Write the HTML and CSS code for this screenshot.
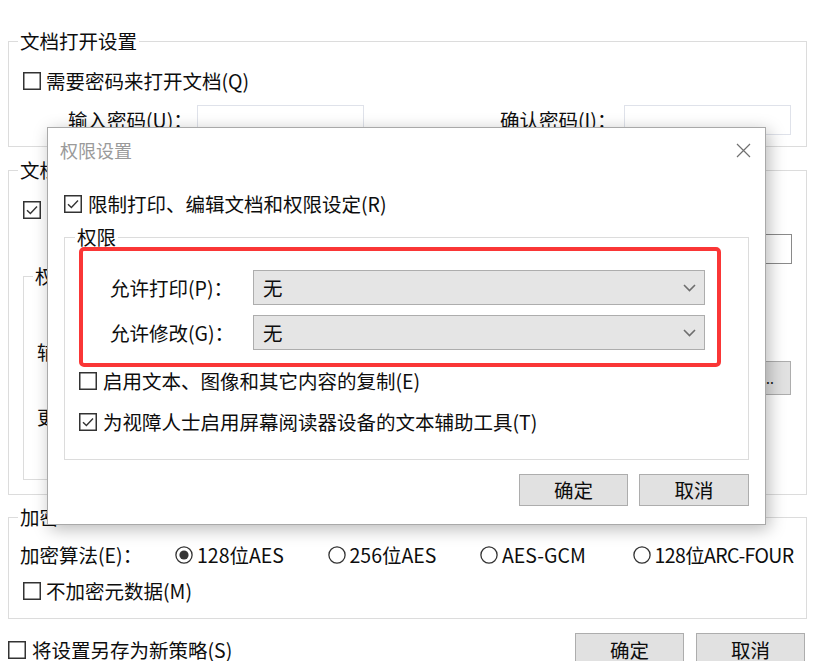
FILE: index.html
```html
<!DOCTYPE html>
<html lang="zh-CN">
<head>
<meta charset="utf-8">
<title>文档安全设置</title>
<link rel="stylesheet" href="styles.css">
</head>
<body>
<div class="page">
  <fieldset class="group g1">
    <legend>文档打开设置</legend>
    <div class="cbrow">
      <svg class="cb" viewBox="0 0 18 18"><rect x="0.75" y="0.75" width="16.5" height="16.5" fill="#fff" stroke="#333" stroke-width="1.5"/></svg>
      <span>需要密码来打开文档(Q)</span>
    </div>
    <div class="pwrow">
      <span class="pwlabel">输入密码(U)：</span>
      <span class="input"></span>
      <span class="pwlabel second">确认密码(I)：</span>
      <span class="input"></span>
    </div>
  </fieldset>

  <fieldset class="group g2">
    <legend>文档限制设置</legend>
    <div class="cbrow">
      <svg class="cb" viewBox="0 0 18 18"><rect x="0.75" y="0.75" width="16.5" height="16.5" fill="#fff" stroke="#333" stroke-width="1.5"/><path d="M4 9.2 7.4 12.6 14 5.6" fill="none" stroke="#333" stroke-width="1.4"/></svg>
      <span>限制打印</span>
    </div>
    <div class="pwrow2">
      <span class="pwlabel">密码</span>
      <span class="input dark"></span>
    </div>
    <div class="g2body">
      <fieldset class="group inner">
        <legend>权</legend>
        <div class="irow first">辅</div>
        <div class="irow second">更</div>
      </fieldset>
      <span class="btn more">...</span>
    </div>
  </fieldset>

  <fieldset class="group g3">
    <legend>加密</legend>
    <div class="radios">
      <span>加密算法(E)：</span>
      <span class="radio"><svg class="rd" viewBox="0 0 18 18"><circle cx="9" cy="9" r="8.1" fill="#fff" stroke="#333" stroke-width="1.3"/><circle cx="9" cy="9" r="4.6" fill="#333"/></svg>128位AES</span>
      <span class="radio"><svg class="rd" viewBox="0 0 18 18"><circle cx="9" cy="9" r="8.1" fill="#fff" stroke="#333" stroke-width="1.3"/></svg>256位AES</span>
      <span class="radio"><svg class="rd" viewBox="0 0 18 18"><circle cx="9" cy="9" r="8.1" fill="#fff" stroke="#333" stroke-width="1.3"/></svg>AES-GCM</span>
      <span class="radio"><svg class="rd" viewBox="0 0 18 18"><circle cx="9" cy="9" r="8.1" fill="#fff" stroke="#333" stroke-width="1.3"/></svg><span class="tight">128位ARC-FOUR</span></span>
    </div>
    <div class="cbrow meta">
      <svg class="cb" viewBox="0 0 18 18"><rect x="0.75" y="0.75" width="16.5" height="16.5" fill="#fff" stroke="#333" stroke-width="1.5"/></svg>
      <span>不加密元数据(M)</span>
    </div>
  </fieldset>

  <div class="footer">
    <svg class="cb" viewBox="0 0 18 18"><rect x="0.75" y="0.75" width="16.5" height="16.5" fill="#fff" stroke="#333" stroke-width="1.5"/></svg>
    <span class="savelabel">将设置另存为新策略(S)</span>
    <span class="btn main ok">确定</span>
    <span class="btn main">取消</span>
  </div>

  <div class="dialog">
    <div class="dlg-title">
      <span>权限设置</span>
      <svg class="close" viewBox="0 0 15 15"><path d="M1 1 14 14 M14 1 1 14" stroke="#707070" stroke-width="1.2" fill="none"/></svg>
    </div>
    <div class="dlg-check">
      <svg class="cb" viewBox="0 0 18 18"><rect x="0.75" y="0.75" width="16.5" height="16.5" fill="#fff" stroke="#333" stroke-width="1.5"/><path d="M4 9.2 7.4 12.6 14 5.6" fill="none" stroke="#333" stroke-width="1.4"/></svg>
      <span>限制打印、编辑文档和权限设定(R)</span>
    </div>
    <fieldset class="group perm">
      <legend>权限</legend>
      <div class="redbox">
        <div class="perm-row">
          <span class="perm-label">允许打印(P)：</span>
          <span class="select"><span>无</span><svg class="chev" viewBox="0 0 13 8"><path d="M1 1 6.5 6.5 12 1" fill="none" stroke="#6e6e6e" stroke-width="1.6"/></svg></span>
        </div>
        <div class="perm-row">
          <span class="perm-label">允许修改(G)：</span>
          <span class="select"><span>无</span><svg class="chev" viewBox="0 0 13 8"><path d="M1 1 6.5 6.5 12 1" fill="none" stroke="#6e6e6e" stroke-width="1.6"/></svg></span>
        </div>
      </div>
      <div class="pcheck first">
        <svg class="cb" viewBox="0 0 18 18"><rect x="0.75" y="0.75" width="16.5" height="16.5" fill="#fff" stroke="#333" stroke-width="1.5"/></svg>
        <span>启用文本、图像和其它内容的复制(E)</span>
      </div>
      <div class="pcheck second">
        <svg class="cb" viewBox="0 0 18 18"><rect x="0.75" y="0.75" width="16.5" height="16.5" fill="#fff" stroke="#333" stroke-width="1.5"/><path d="M4 9.2 7.4 12.6 14 5.6" fill="none" stroke="#333" stroke-width="1.4"/></svg>
        <span>为视障人士启用屏幕阅读器设备的文本辅助工具(T)</span>
      </div>
    </fieldset>
    <div class="dlg-buttons">
      <span class="btn dbtn ok">确定</span>
      <span class="btn dbtn cancel">取消</span>
    </div>
  </div>
</div>
</body>
</html>
```

FILE: styles.css
```css
html, body {
  margin: 0;
  padding: 0;
  background: #fff;
}
body {
  width: 817px;
  height: 661px;
  overflow: hidden;
  font-family: "Noto Sans CJK SC", "Noto Sans", sans-serif;
  font-size: 19.5px;
  line-height: 24px;
  color: #0d0d0d;
}
.page {
  position: relative;
  width: 799px;
  padding: 29px 0 0 8px;
}
.group {
  border: 1px solid #dcdcdc;
  margin: 0;
  padding: 0;
  min-width: 0;
}
.group > legend {
  margin-left: 9px;
  padding: 0 2px;
  line-height: 24px;
}
.cb {
  width: 18px;
  height: 18px;
  flex: none;
  display: block;
}
.rd {
  width: 18px;
  height: 18px;
  flex: none;
  display: block;
}
.cbrow {
  display: flex;
  align-items: center;
  gap: 5px;
  height: 24px;
  margin: 16px 0 0 14px;
  white-space: nowrap;
}
.pwrow {
  display: flex;
  align-items: center;
  height: 30px;
  margin: 12px 0 11px 59px;
  white-space: nowrap;
}
.pwlabel {
  width: 129px;
  flex: none;
}
.pwlabel.second {
  margin-left: 136px;
  width: 124px;
}
.input {
  display: block;
  width: 167px;
  height: 30px;
  box-sizing: border-box;
  border: 1px solid #dfe2ea;
  background: #fff;
  flex: none;
}
.input.dark {
  width: 190px;
  border-color: #8a8a8a;
}
.g2 {
  margin-top: 11px;
  padding-bottom: 14px;
}
.pwrow2 {
  display: flex;
  align-items: center;
  justify-content: space-between;
  height: 30px;
  margin: 12px 14px 0 59px;
  white-space: nowrap;
}
.g2body {
  display: grid;
}
.inner {
  grid-area: 1 / 1;
  margin: 0 46px 0 14px;
  padding-bottom: 50px;
}
.irow {
  height: 24px;
  margin-left: 13px;
  white-space: nowrap;
}
.irow.first { margin-top: 52px; }
.irow.second { margin-top: 41px; }
.btn {
  display: flex;
  align-items: center;
  justify-content: center;
  box-sizing: border-box;
  background: #e1e1e1;
  border: 1px solid #adadad;
  white-space: nowrap;
}
.btn.more {
  grid-area: 1 / 1;
  justify-self: end;
  align-self: start;
  width: 40px;
  height: 34px;
  margin: 97px 15px 0 0;
  padding-right: 6px;
  font-size: 14px;
}
.g3 {
  margin-top: 10px;
  padding-bottom: 15px;
}
.radios {
  display: grid;
  grid-template-columns: 155px repeat(4, 152.5px);
  align-items: center;
  height: 24px;
  margin: 14px 0 0 11px;
  white-space: nowrap;
}
.radio {
  display: flex;
  align-items: center;
  gap: 4px;
}
.tight {
  letter-spacing: -0.6px;
}
.cbrow.meta {
  margin-top: 12px;
}
.footer {
  display: flex;
  align-items: center;
  height: 33px;
  margin-top: 14px;
  white-space: nowrap;
}
.footer .cb {
  margin-right: 6px;
}
.savelabel {
  flex: 1;
}
.btn.main {
  width: 109px;
  height: 33px;
  margin-right: 2px;
}
.btn.main.ok {
  margin-right: 12px;
}

/* dialog overlay */
.dialog {
  position: absolute;
  left: 47px;
  top: 127px;
  width: 719px;
  box-sizing: border-box;
  background: #fff;
  border: 1px solid #a9a9a9;
  box-shadow: 3px 4px 16px rgba(0, 0, 0, 0.28);
  padding: 0 16px 18px;
}
.dlg-title {
  display: flex;
  align-items: center;
  justify-content: space-between;
  height: 44px;
  margin: 0 -2px 0 -4px;
  font-size: 18px;
  color: #9a9a9a;
}
.close {
  width: 15px;
  height: 15px;
  display: block;
}
.dlg-check {
  display: flex;
  align-items: center;
  gap: 6px;
  height: 24px;
  margin-top: 20px;
  white-space: nowrap;
}
.perm {
  margin-top: 11px;
  padding: 0 0 25px 14px;
}
.perm > legend {
  margin-left: -4px;
  line-height: 20px;
}
.redbox {
  width: 642px;
  height: 120px;
  box-sizing: border-box;
  border: 4px solid #fa3636;
  border-radius: 5px;
  padding: 19px 12px 13px 27px;
  display: flex;
  flex-direction: column;
  gap: 10px;
}
.perm-row {
  display: flex;
  align-items: center;
  height: 35px;
  white-space: nowrap;
}
.perm-label {
  width: 143px;
  flex: none;
}
.select {
  display: flex;
  align-items: center;
  justify-content: space-between;
  width: 452px;
  height: 35px;
  box-sizing: border-box;
  border: 1px solid #adadad;
  background: #e5e5e5;
  padding: 0 8px 0 9px;
}
.chev {
  width: 13px;
  height: 8px;
  display: block;
}
.pcheck {
  display: flex;
  align-items: center;
  gap: 6px;
  height: 24px;
  white-space: nowrap;
}
.pcheck.first { margin-top: 2px; }
.pcheck.second { margin-top: 17px; }
.dlg-buttons {
  display: flex;
  justify-content: flex-end;
  gap: 11px;
  margin-top: 14px;
}
.btn.dbtn {
  width: 109px;
  height: 32px;
}
.btn.dbtn.cancel {
  width: 110px;
}
```
